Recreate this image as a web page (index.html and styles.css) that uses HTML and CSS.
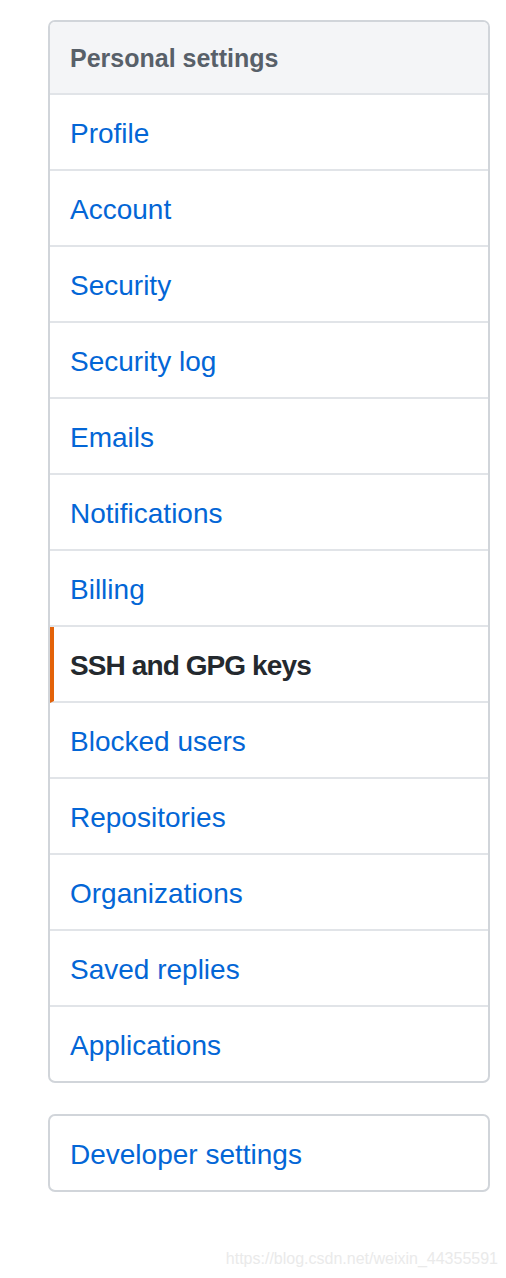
FILE: index.html
```html
<!DOCTYPE html>
<html lang="en">
<head>
<meta charset="utf-8">
<title>Settings menu</title>
<link rel="stylesheet" href="styles.css">
</head>
<body>
<div class="page">
  <nav class="menu">
    <h3 class="menu-heading">Personal settings</h3>
    <a class="menu-item" href="#">Profile</a>
    <a class="menu-item" href="#">Account</a>
    <a class="menu-item" href="#">Security</a>
    <a class="menu-item" href="#">Security log</a>
    <a class="menu-item" href="#">Emails</a>
    <a class="menu-item" href="#">Notifications</a>
    <a class="menu-item" href="#">Billing</a>
    <a class="menu-item selected" href="#">SSH and GPG keys</a>
    <a class="menu-item" href="#">Blocked users</a>
    <a class="menu-item" href="#">Repositories</a>
    <a class="menu-item" href="#">Organizations</a>
    <a class="menu-item" href="#">Saved replies</a>
    <a class="menu-item" href="#">Applications</a>
  </nav>
  <nav class="menu">
    <a class="menu-item" href="#">Developer settings</a>
  </nav>
  <div class="watermark">https://blog.csdn.net/weixin_44355591</div>
</div>
</body>
</html>
```
FILE: styles.css
```css
* { box-sizing: border-box; }
html, body { margin: 0; padding: 0; background: #fff; }
body {
  font-family: "Liberation Sans", Arial, sans-serif;
  width: 506px;
  height: 1278px;
  overflow: hidden;
}
.page {
  padding: 20px 0 0 48px;
}
.menu {
  width: 442px;
  border: 2px solid #d1d5da;
  border-radius: 7px;
  overflow: hidden;
  margin-bottom: 31px;
  display: flex;
  flex-direction: column;
  background: #fff;
}
.menu-heading {
  margin: 0;
  padding: 17px 20px 15px;
  font-size: 25px;
  line-height: 39px;
  font-weight: 700;
  color: #586069;
  background: #f4f5f7;
  border-bottom: 2px solid #e1e4e8;
}
.menu-item {
  display: block;
  padding: 18px 20px 14px;
  font-size: 28px;
  line-height: 42px;
  color: #0366d6;
  text-decoration: none;
  border-bottom: 2px solid #e1e4e8;
}
.menu-item:last-child { border-bottom: none; }
.menu-item.selected {
  color: #24292e;
  font-weight: 700;
  letter-spacing: -0.9px;
  padding-left: 16px;
  border-left: 4px solid #e36209;
}
.watermark {
  margin-top: 58px;
  padding-right: 8px;
  text-align: right;
  width: 458px;
  font-size: 16px;
  color: #eaeaea;
  white-space: nowrap;
}
```
